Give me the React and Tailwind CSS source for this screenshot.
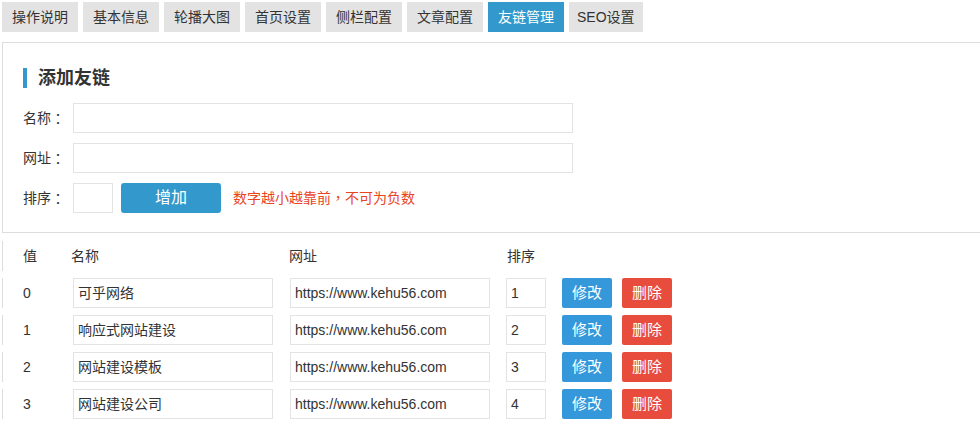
import React from "react";

const tabs = ["操作说明", "基本信息", "轮播大图", "首页设置", "侧栏配置", "文章配置", "友链管理", "SEO设置"];
const rows = [
  { v: "0", name: "可乎网络", url: "https://www.kehu56.com", sort: "1" },
  { v: "1", name: "响应式网站建设", url: "https://www.kehu56.com", sort: "2" },
  { v: "2", name: "网站建设模板", url: "https://www.kehu56.com", sort: "3" },
  { v: "3", name: "网站建设公司", url: "https://www.kehu56.com", sort: "4" },
];

const tc = { fontFamily: '"Noto Sans CJK TC", sans-serif' };

function Label({ text }) {
  return (
    <div className="w-[50px] flex">
      <span>{text}</span>
      <span className="w-[14px] text-center" style={tc}>：</span>
    </div>
  );
}

export default function App() {
  return (
    <div
      className="w-[980px] h-[423px] overflow-hidden bg-white text-[14px] text-[#333]"
      style={{ fontFamily: '"Liberation Sans", "Noto Sans CJK SC", sans-serif' }}
    >
      {/* tabs */}
      <div className="flex gap-[5px] ml-[2px] pt-[2px]">
        {tabs.map((t, i) => (
          <div
            key={t}
            className={
              "h-[30px] flex items-center leading-[30px] " +
              (i === 7 ? "px-[8px] " : "px-[10px] ") +
              (i === 6 ? "bg-[#3399cc] text-white" : "bg-[#e3e3e3] text-[#333]")
            }
          >
            {t}
          </div>
        ))}
      </div>

      {/* add panel */}
      <div className="mt-[10px] ml-[2px] border-t border-l border-b border-[#dddddd] pl-[20px] pt-[25px] pb-[19px]">
        <div className="flex items-center h-[20px]">
          <div className="w-[4px] h-[20px] bg-[#3399cc]" />
          <div className="ml-[11px] text-[18px] font-bold leading-[20px] text-[#333]">添加友链</div>
        </div>
        <div className="flex items-center mt-[15px] h-[30px]">
          <Label text="名称" />
          <div className="w-[500px] h-[30px] border border-[#e3e3e3] bg-white" />
        </div>
        <div className="flex items-center mt-[10px] h-[30px]">
          <Label text="网址" />
          <div className="w-[500px] h-[30px] border border-[#e3e3e3] bg-white" />
        </div>
        <div className="flex items-center mt-[10px] h-[30px]">
          <Label text="排序" />
          <div className="w-[40px] h-[30px] border border-[#e3e3e3] bg-white" />
          <div className="ml-[8px] w-[100px] h-[30px] rounded-[3px] bg-[#3399cc] text-white text-[16px] flex items-center justify-center">
            增加
          </div>
          <div className="ml-[12px] text-[#e8441e]">
            数字越小越靠前<span style={tc}>，</span>不可为负数
          </div>
        </div>
      </div>

      {/* table */}
      <div className="mt-[8px] ml-[2px] flex flex-col gap-[7px]">
        <div className="flex items-center h-[30px] border-l border-[#dddddd]">
          <div className="w-[68px] pl-[20px]">值</div>
          <div className="w-[218px]">名称</div>
          <div className="w-[218px]">网址</div>
          <div>排序</div>
        </div>
        {rows.map((r) => (
          <div key={r.v} className="flex items-center h-[30px] border-l border-[#dddddd]">
            <div className="w-[68px] pl-[20px]">{r.v}</div>
            <div className="w-[218px]">
              <div className="ml-[2px] w-[200px] h-[30px] border border-[#e3e3e3] px-[4px] flex items-center text-[#333]">
                {r.name}
              </div>
            </div>
            <div className="w-[218px]">
              <div className="ml-[1px] w-[200px] h-[30px] border border-[#e3e3e3] px-[4px] flex items-center text-[#333]">
                {r.url}
              </div>
            </div>
            <div className="-ml-[1px] w-[40px] h-[30px] border border-[#e3e3e3] px-[4px] flex items-center text-[#333]">
              {r.sort}
            </div>
            <div className="ml-[16px] w-[50px] h-[30px] rounded-[2px] bg-[#3498db] text-white text-[15px] flex items-center justify-center">
              修改
            </div>
            <div className="ml-[10px] w-[50px] h-[30px] rounded-[2px] bg-[#e74c3c] text-white text-[15px] flex items-center justify-center">
              删除
            </div>
          </div>
        ))}
      </div>
    </div>
  );
}
